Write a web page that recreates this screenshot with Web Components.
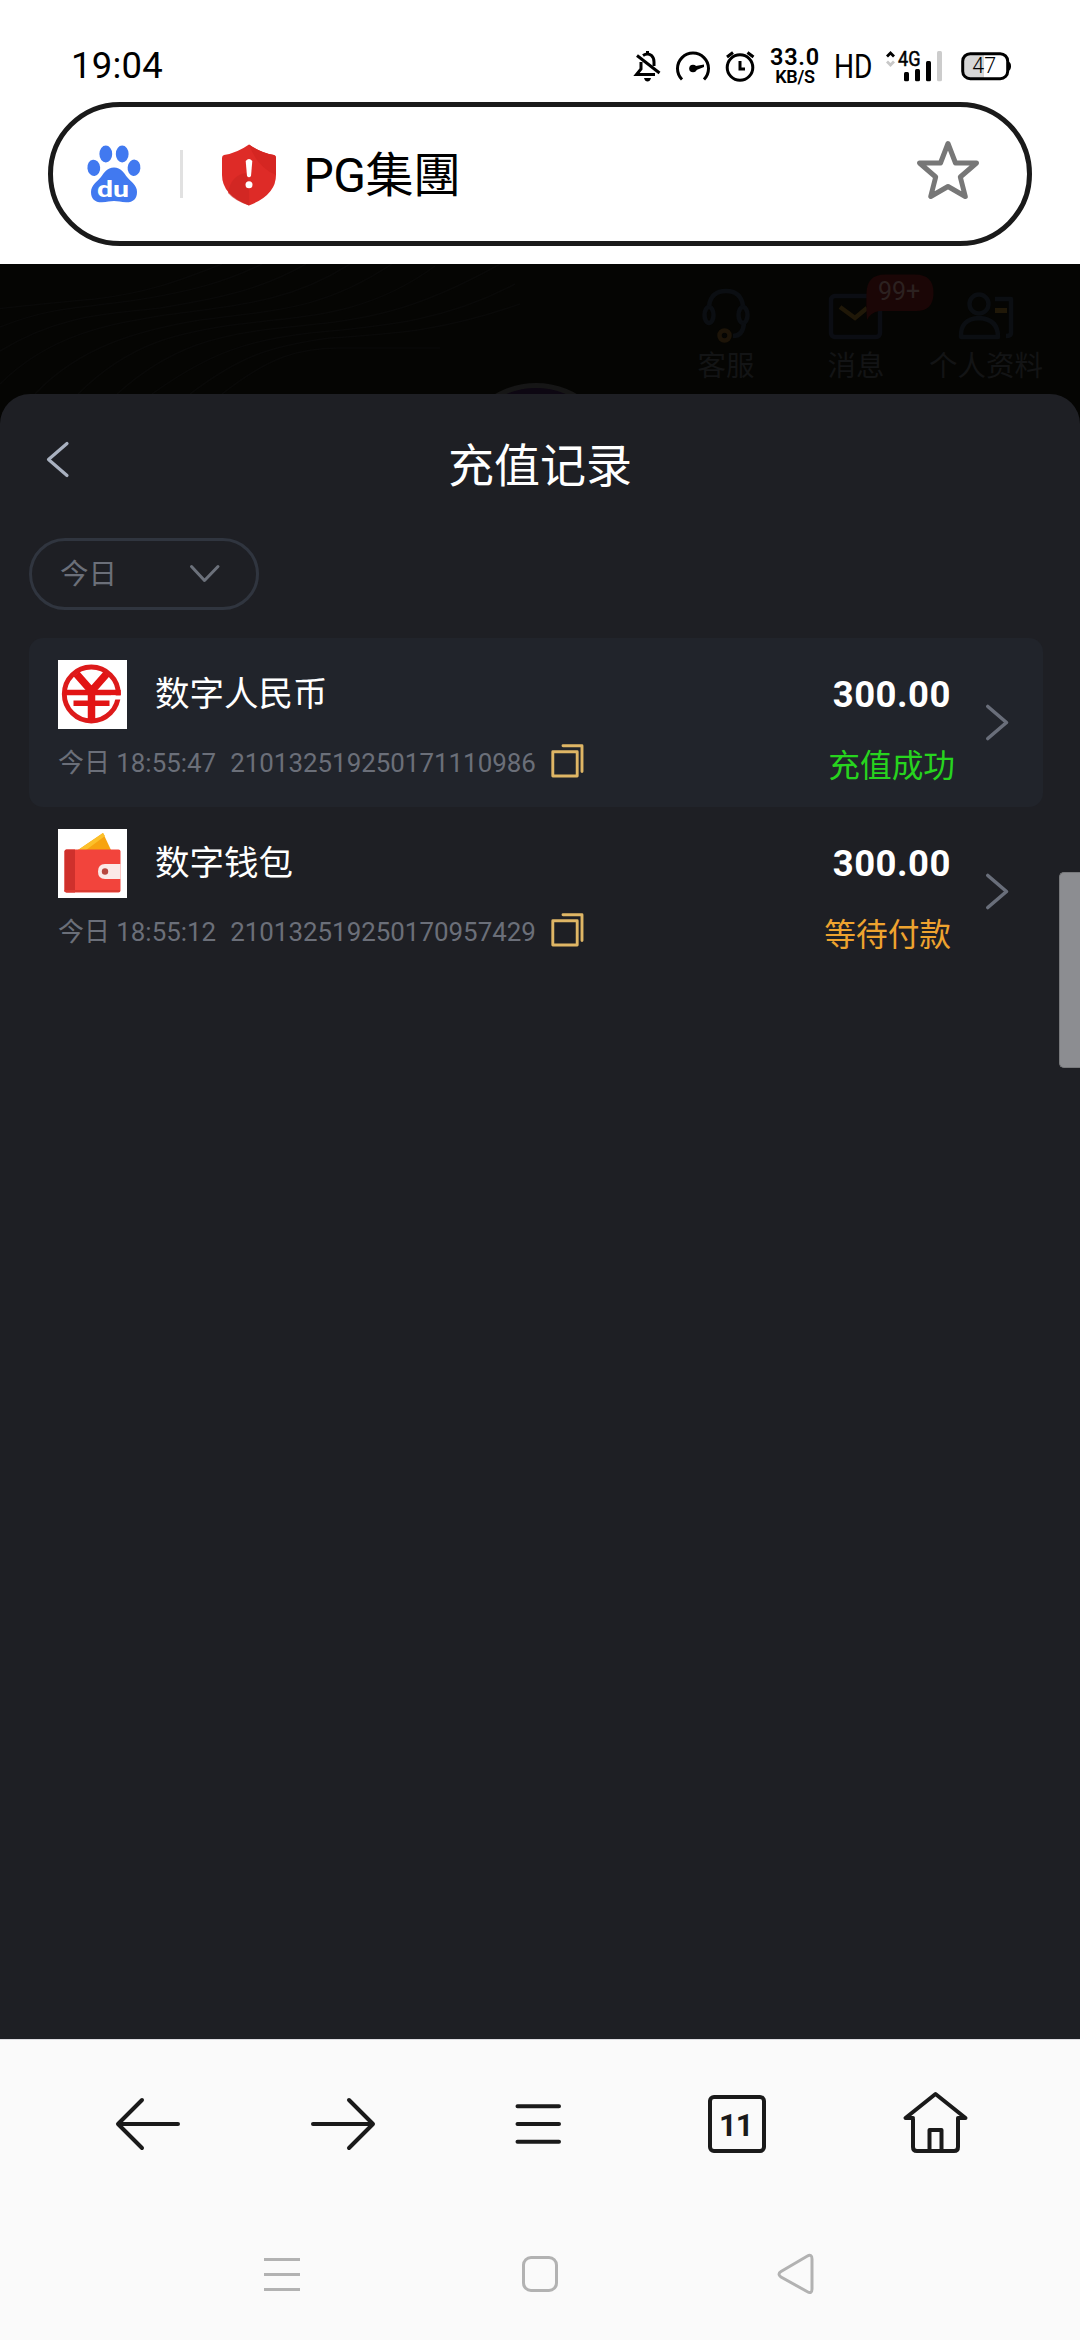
<!DOCTYPE html>
<html lang="zh">
<head>
<meta charset="utf-8">
<title>充值记录</title>
<style>
html,body{margin:0;padding:0;background:#fff}
body{width:1080px;height:2340px;overflow:hidden;font-family:Roboto,"Noto Sans CJK SC",sans-serif}
</style>
</head>
<body>
<phone-screen></phone-screen>
<script>
const define = (name, render) => customElements.define(name, class extends HTMLElement {
  connectedCallback() {
    if (this.shadowRoot) return;
    this.attachShadow({mode: 'open'}).innerHTML = render(this);
  }
});

/* name: [viewBox x, y, width, height, body] */
const ICONS = {
  bell: [633,49,30,34,'<g fill="none" stroke="#000" stroke-width="3"><path d="M637 55.5L659.5 73"/><path d="M641 62V69L636.5 74.5H655"/><path d="M643 55.5Q647.5 52.5 651.5 55.5Q654 58 654 62V66"/><path d="M647.5 51V54"/></g><path d="M644 78h7q-1 3.5-3.5 3.500q-2.500 0-3.500-3.500z"/>'],
  gauge: [674,49,38,34,'<path d="M682 79.500A15.500 15.500 0 1 1 704 79.500" fill="none" stroke="#000" stroke-width="3"/><circle cx="693" cy="68.500" r="3.800"/><path d="M693 66.500L704 64.500V67L694 71z"/>'],
  alarm: [724,49,34,34,'<g fill="none" stroke="#000" stroke-width="3"><circle cx="740" cy="67.500" r="12.800"/><path d="M740 61V69H745M727 57L733 52.500M753.500 57L747.500 52.500"/></g>'],
  signal: [884,48,60,36,'<path d="M887 56.500L890.500 53L894 56.500" fill="none" stroke="#000" stroke-width="2.800"/><path d="M887 61.500L890.500 65L894 61.500" fill="none" stroke="#c8c8c8" stroke-width="2.800"/><text x="898" y="66.300" font-size="21" font-family="Roboto" textLength="22.500" lengthAdjust="spacingAndGlyphs" stroke="#000" stroke-width=".5">4G</text><g><rect x="904" y="72" width="5" height="9.300" rx="1.500"/><rect x="915" y="69" width="5" height="12.300" rx="1.500"/><rect x="926" y="61" width="5" height="20.300" rx="1.500"/><rect x="937" y="51" width="5" height="30.300" rx="1.500" fill="#ccc"/></g>'],
  battery: [959,50,54,33,'<rect x="962.700" y="53.700" width="45" height="25" rx="7.500" fill="#fff"/><path d="M984 53.700H970Q962.700 53.700 962.700 61V71.500Q962.700 78.700 970 78.700H984z" fill="#d6d6d6"/><rect x="962.700" y="53.700" width="45" height="25" rx="7.500" fill="none" stroke="#000" stroke-width="3"/><path d="M1008 61.500q3 .5 3 4.700t-3 4.700z"/><text x="972.300" y="73.300" font-size="21.500" font-weight="300" font-family="Roboto">47</text>'],
  paw: [86,144,56,60,'<g fill="#4179f0"><ellipse cx="105.800" cy="154" rx="6.400" ry="8.500"/><ellipse cx="122.200" cy="154" rx="6.400" ry="8.500"/><ellipse cx="93.800" cy="167.800" rx="6.400" ry="8.200" transform="rotate(-6 94 168)"/><ellipse cx="134" cy="167.800" rx="6.400" ry="8.200" transform="rotate(6 134 168)"/><path d="M114 167.500C121 167.500 124 173 127 177C131 182 137 185 137 192C137 199 133 202.500 126 202.300C121 202.200 118 201 114 201C110 201 107 202.200 102 202.300C95 202.500 91 199 91 192C91 185 97 182 101 177C104 173 107 167.500 114 167.500z"/></g><text x="97" y="196.500" font-family="Roboto" font-weight="700" font-size="21.500" textLength="32" lengthAdjust="spacingAndGlyphs" fill="#fff">du</text>'],
  shield: [219,140,60,67,'<path d="M249 143.500Q261 152 274 154Q276 154.500 276 157V174Q276 194 249 204.500Q222 194 222 174V157Q222 154.500 224 154Q237 152 249 143.500z" fill="#de2b27"/><path d="M249 143.500Q261 152 274 154Q276 154.500 276 157V174Q257 166 249 143.500z" fill="#d52622"/><path d="M228 192Q231 174 246 172Q250 180 249 204.500Q235 200 228 192z" fill="#cd2622" opacity=".7"/><path d="M245.700 160Q249 156 252.300 160L251 175Q249 177.500 247 175z" fill="#fff"/><circle cx="249" cy="183.800" r="3.500" fill="#fff"/>'],
  star: [914,138,68,66,'<path d="M948 143.500L955.500 163H976.500L960.300 177L965.300 196.500L948 186.500L930.700 196.500L935.700 177L919.500 163H940.500z" fill="none" stroke="#777" stroke-width="5" stroke-linejoin="round"/>'],
  headset: [700,285,52,62,'<g fill="none" stroke="#0b0e12" stroke-width="4.500"><ellipse cx="709" cy="315" rx="4.500" ry="8"/><ellipse cx="743" cy="315" rx="4.500" ry="8"/><path d="M709 306Q711 291 726 291T743 306M744 323Q743 336 733 336"/></g><circle cx="724.500" cy="335.500" r="5" fill="none" stroke="#1d1408" stroke-width="4.500"/>'],
  mail: [828,290,58,52,'<rect x="832" y="296" width="49" height="41" rx="4" fill="none" stroke="#0b0d13" stroke-width="4.500"/><path d="M841 307L856 318L868 308" fill="none" stroke="#201808" stroke-width="4.500"/>'],
  profile: [956,290,60,52,'<g fill="none" stroke="#0b0e12" stroke-width="4.500" stroke-linejoin="round"><circle cx="979" cy="304" r="9.500"/><path d="M961 337Q960 319 979 318Q998 319 998 337zM995 299H1011V333Q1011 336 1006 336"/></g><path d="M995 310.500H1007" stroke="#201808" stroke-width="5"/>'],
  back: [44,438,28,43,'<path d="M67 443.500L48.500 459.500L67 475.500" fill="none" stroke="#a9b1c0" stroke-width="3.200" stroke-linecap="round" stroke-linejoin="round"/>'],
  down: [187,562,35,24,'<path d="M191.500 566.500L204.500 580.500L218 566.500" fill="none" stroke="#6c717b" stroke-width="3" stroke-linecap="round" stroke-linejoin="round"/>'],
  copy: [550,743,35,36,'<g fill="none" stroke="#dfb665" stroke-width="2.900" stroke-linejoin="round" stroke-linecap="round"><rect x="552.800" y="751.700" width="24.400" height="24.300"/><path d="M563 745.800H582V771.500"/></g>'],
  next: [984,702,27,41,'<path d="M987.800 706.500L1006.500 722.500L987.800 738.500" fill="none" stroke="#696e7a" stroke-width="3.600" stroke-linecap="round" stroke-linejoin="round"/>'],
  yuan: [58,660,69,69,'<path d="M58 660h69v69h-69z" fill="#fff"/><circle cx="91.300" cy="694" r="27" fill="none" stroke="#dd1a1a" stroke-width="4.900"/><g fill="none" stroke="#e21414" stroke-width="7.500"><path d="M76.500 674L91.500 691L106.500 674M91.500 688V720"/><path d="M64 692.500H120.800M73.500 703.200H109.500" stroke-width="5.600"/></g><path d="M111 697.500H124" stroke="#fff" stroke-width="4"/>'],
  wallet: [58,829,69,69,'<path d="M58 829h69v69h-69z" fill="#fff"/><path d="M78 850L103 833L111 850z" fill="#f7a310"/><path d="M78 850L103 833L105 836L86 850z" fill="#fcc02a"/><rect x="64.500" y="849.500" width="56" height="43" rx="2" fill="#f2443c"/><path d="M66.500 849.500H75V892.500H66.500Q64.500 892.500 64.500 890.500V851.500Q64.500 849.500 66.500 849.500z" fill="#cf302c"/><path d="M64.500 891H120" stroke="#d93b32" stroke-width="2"/><path d="M120.500 864H105Q98 864 98 871.500T105 879H120.500z" fill="#fbe9e7"/><circle cx="105" cy="871.500" r="3.200" fill="#b8473f"/>'],
  tback: [113,2094,70,60,'<path d="M178 2124H119M142 2100L118 2124L142 2148" fill="none" stroke="#1a1a1a" stroke-width="4" stroke-linecap="round" stroke-linejoin="round"/>'],
  tfwd: [308,2094,70,60,'<path d="M313 2124H372M349 2100L373 2124L349 2148" fill="none" stroke="#1a1a1a" stroke-width="4" stroke-linecap="round" stroke-linejoin="round"/>'],
  tmenu: [512,2100,52,48,'<path d="M517.500 2106.300H559M517.500 2124H559M517.500 2141.700H559" stroke="#1a1a1a" stroke-width="4" stroke-linecap="round"/>'],
  tabs: [706,2093,62,62,'<rect x="710" y="2097" width="54" height="54" rx="4" fill="none" stroke="#1a1a1a" stroke-width="4"/><text x="719" y="2135.800" font-size="31" font-weight="700" font-family="Roboto" textLength="34.500" fill="#1a1a1a">11</text>'],
  home: [900,2088,72,68,'<path d="M913 2119V2147Q913 2151 917 2151H954Q958 2151 958 2147V2118H965.500L935.500 2094L905.500 2118H913M929.500 2150V2130H941.500V2150" fill="none" stroke="#1a1a1a" stroke-width="4" stroke-linejoin="round" stroke-linecap="round"/>'],
  nrecent: [262,2256,40,37,'<path d="M264 2259.500H300M264 2274.500H300M264 2289.500H300" stroke="#b2b2b2" stroke-width="3"/>'],
  nhome: [520,2254,40,41,'<rect x="523.500" y="2257.500" width="33" height="33" rx="7.500" fill="none" stroke="#b2b2b2" stroke-width="3"/>'],
  nback: [774,2252,43,45,'<path d="M807 2256.200Q812 2253.500 812 2259V2289Q812 2294.500 807 2291.500L781 2277Q777 2274 781 2271.500z" fill="none" stroke="#b2b2b2" stroke-width="3"/>']
};

define('ui-icon', el => {
  const [x, y, w, h, body] = ICONS[el.getAttribute('name')];
  return `<style>:host{display:block;flex:none;width:${w}px;height:${h}px}svg{display:block}</style>
  <svg width="${w}" height="${h}" viewBox="${x} ${y} ${w} ${h}">${body}</svg>`;
});

define('status-bar', () => `<style>
:host{display:flex;height:102px;box-sizing:border-box;padding:0 67px 0 71px;justify-content:space-between;color:#000}
.time{font-size:36.500px;line-height:40px;margin-top:46px;letter-spacing:.2px}
.right{display:flex;align-items:flex-start;margin-top:48px}
.right>*{flex:none}
.speed{display:flex;flex-direction:column;align-items:center;width:52px;margin:0 0 0 11px;white-space:nowrap}
.a{font-size:23.500px;line-height:19px;height:18px;letter-spacing:.7px;font-weight:600}
.b{font-size:18px;line-height:21px;letter-spacing:-.3px;font-weight:600}
.hd{width:42px;height:36px;margin-left:13px}
.hd span{display:inline-block;font-size:33.500px;line-height:37px;transform:scaleX(.84);transform-origin:0 0}
</style>
<div class="time">19:04</div>
<div class="right">
<ui-icon name="bell" style="margin-top:1px"></ui-icon>
<ui-icon name="gauge" style="margin:1px 0 0 11px"></ui-icon>
<ui-icon name="alarm" style="margin:1px 0 0 12px"></ui-icon>
<div class="speed"><div class="a">33.0</div><div class="b">KB/S</div></div>
<div class="hd"><span>HD</span></div>
<ui-icon name="signal" style="margin-left:8px"></ui-icon>
<ui-icon name="battery" style="margin:2px 0 0 15px"></ui-icon>
</div>`);

define('address-bar', () => `<style>
:host{display:flex;align-items:center;height:144px;width:984px;box-sizing:border-box;border:5px solid #1a1a1a;border-radius:72px;margin:0 48px 18px;padding:0 45px 0 33px;background:#fff}
.line{width:3px;height:48px;background:#e1e1e1;margin:0 36px 0 38px}
.site{font:48px/56px Roboto,"Noto Sans CJK TC",sans-serif;letter-spacing:-.5px;color:#000;margin:4px auto 0 24.500px;white-space:nowrap}
</style>
<ui-icon name="paw"></ui-icon><div class="line"></div><ui-icon name="shield"></ui-icon><div class="site">PG集團</div><ui-icon name="star" style="margin-top:-6px"></ui-icon>`);

define('quick-link', () => `<style>
:host{display:flex;flex-direction:column;align-items:center;width:130px;font-size:28.500px;line-height:36px;color:#131415;position:relative}
.pic{height:64px;display:flex;align-items:flex-start}
</style><div class="pic"><slot name="icon"></slot></div><span><slot></slot></span><slot name="badge"></slot>`);

define('count-badge', () => `<style>
:host{position:absolute;left:74px;top:-11px;width:69px;height:48px}
svg{display:block}
</style><svg width="69" height="48" viewBox="865 274 69 48"><path d="M885 274.500H915Q933.500 274.500 933.500 293T915 311H879Q870 313 867 320Q866 305 866.500 293Q867 274.500 885 274.500z" fill="#1b0606"/><text x="878" y="300" font-size="25" font-family="Roboto" fill="#2c2120">99+</text></svg>`);

define('dimmed-header', () => `<style>
:host{display:flex;justify-content:flex-end;height:160px;box-sizing:border-box;padding:21px 29px 0 0;background:#050503;position:relative}
.avatar{position:absolute;left:454px;top:119px;width:154px;height:154px;border:5px solid #161616;border-radius:50%;background:#0d0712}
.waves{position:absolute;left:0;top:0}
</style>
<svg class="waves" width="520" height="130" viewBox="0 0 520 130" fill="none" stroke="#090908" stroke-width="1.500"><path d="M0 44.500Q50 39 95 35C155 28 190 12 222 0M0 63C50 43 80 44 130 37C190 28 225 18 262 0M0 87C60 50 110 50 160 44C220 34 260 26 306 0M0 120C50 70 110 60 165 51C240 41 290 38 350 0M35 130C80 82 140 66 200 56C270 46 320 48 392 0M78 130C130 78 180 68 240 60C310 52 370 50 435 2M117 130C170 82 220 70 280 64C350 56 400 56 500 0M152 130C210 88 250 76 310 69C370 63 440 60 515 20M190 130C240 92 270 82 330 74C390 70 440 68 520 40M222 130C270 92 300 84 340 84H440"/></svg>
<div class="avatar"></div>
<quick-link><ui-icon slot="icon" name="headset"></ui-icon>客服</quick-link>
<quick-link><ui-icon slot="icon" name="mail" style="margin-top:5px"></ui-icon>消息<count-badge slot="badge"></count-badge></quick-link>
<quick-link><ui-icon slot="icon" name="profile" style="margin-top:5px"></ui-icon>个人资料</quick-link>`);

define('sheet-title', () => `<style>
:host{display:grid;grid-template-columns:72px 1fr 72px;height:144px;padding:0;box-sizing:border-box}
ui-icon{margin:44px 0 0 44px}
h1{margin:38.500px 0 0;font-weight:400;font-size:46px;line-height:66px;text-align:center;color:#fff}
</style><ui-icon name="back"></ui-icon><h1><slot></slot></h1>`);

define('date-filter', () => `<style>
:host{display:flex;align-items:center;justify-content:space-between;width:230px;height:72px;box-sizing:border-box;border:3px solid #30353f;border-radius:36px;margin:0 0 28px 29px;padding:0 34px 0 28px;font-size:28.500px;line-height:36px;color:#6b6f79}
span{margin-top:2px}
</style><span><slot></slot></span><ui-icon name="down"></ui-icon>`);

define('record-row', el => {
  const a = n => el.getAttribute(n);
  return `<style>
:host{display:flex;height:169px;box-sizing:border-box;width:1014px;margin-left:29px;border-radius:14px;padding:22px 32px 0 29px}
:host([shaded]){background:#21242b}
.main{flex:1}
.top{display:flex;height:69px;gap:28px}
.name{font-size:34.500px;line-height:50px;margin-top:9px;color:#fff}
.meta{display:flex;align-items:flex-start;height:36px;margin-top:14px;font-size:25.920px;line-height:36px;color:#6b6f79;white-space:nowrap}
.meta span{margin-top:2px}
.meta span+span{margin:2px 14px 0 14px}
.sum{display:flex;flex-direction:column;align-items:flex-end;width:200px}
.amount{font-weight:700;font-size:36.500px;line-height:44px;color:#fff;letter-spacing:.5px;margin-top:13px}
.state{font-size:31.700px;line-height:44px;margin-top:28px;color:${a('tone')};margin-right:${a('shift') || '0'}px}
.go{margin:42px 0 0 33px}
</style>
<div class="main"><div class="top"><ui-icon name="${a('logo')}"></ui-icon><div class="name">${a('name')}</div></div>
<div class="meta"><span>今日 ${a('time')}</span><span>${a('order')}</span><ui-icon name="copy"></ui-icon></div></div>
<div class="sum"><div class="amount">300.00</div><div class="state">${a('state')}</div></div>
<ui-icon class="go" name="next"></ui-icon>`;
});

define('record-sheet', () => `<style>
:host{display:block;height:1645px;margin-top:-30px;background:#1e1f24;border-radius:30px 30px 0 0;position:relative}
.thumb{position:absolute;left:1059px;top:478px;width:21px;height:196px;box-sizing:border-box;border:1px solid #77787b;border-right:0;border-radius:5px 0 0 5px;background:#8c8d91}
</style>
<sheet-title>充值记录</sheet-title>
<date-filter>今日</date-filter>
<record-row shaded logo="yuan" name="数字人民币" time="18:55:47" order="210132519250171110986" state="充值成功" tone="#27d41e" shift="-4"></record-row>
<record-row logo="wallet" name="数字钱包" time="18:55:12" order="210132519250170957429" state="等待付款" tone="#eea32f"></record-row>
<div class="thumb"></div>`);

define('browser-toolbar', () => `<style>
:host{display:flex;align-items:center;height:170px;box-sizing:border-box;border-top:1px solid #dcdce0;background:#fafafa;padding:0 108px 1px 113px}
</style><ui-icon name="tback"></ui-icon><ui-icon name="tfwd" style="margin-left:125px"></ui-icon><ui-icon name="tmenu" style="margin-left:134px"></ui-icon><ui-icon name="tabs" style="margin-left:142px"></ui-icon><ui-icon name="home" style="margin:-4px 0 0 132px"></ui-icon>`);

define('system-nav', () => `<style>
:host{display:flex;align-items:center;height:131px;box-sizing:border-box;background:#fafafa;padding:0 263px 0 262px}
</style><ui-icon name="nrecent"></ui-icon><ui-icon name="nhome" style="margin-left:218px"></ui-icon><ui-icon name="nback" style="margin-left:214px"></ui-icon>`);

define('phone-screen', () => `<style>:host{display:flex;flex-direction:column;width:1080px;height:2340px;background:#fff;overflow:hidden}:host>*,:host *{flex:none}</style>
<status-bar></status-bar><address-bar></address-bar><dimmed-header></dimmed-header><record-sheet></record-sheet><browser-toolbar></browser-toolbar><system-nav></system-nav>`);
</script>
</body>
</html>
